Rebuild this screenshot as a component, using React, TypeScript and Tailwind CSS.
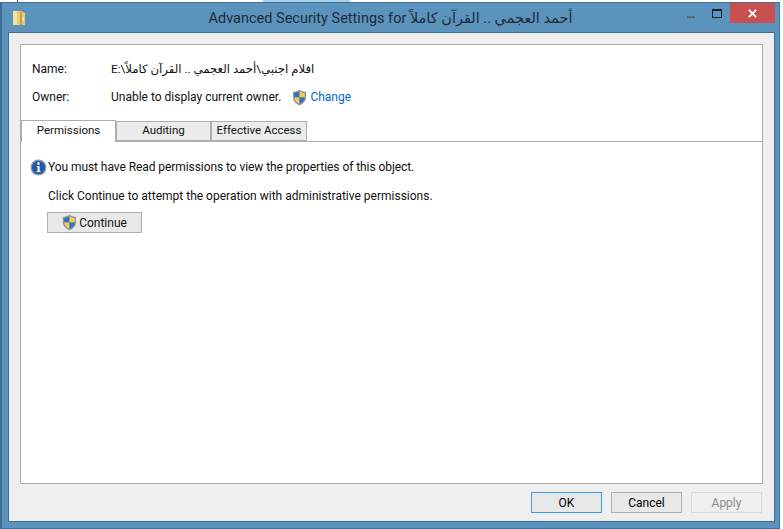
function Shield({ className }: { className?: string }) {
  return (
    <svg viewBox="0 0 16 18" className={className}>
      <path d="M8 .6 C6 2 3.4 2.8 1 2.9 V9 C1 13 4.4 16 8 17.4 C11.6 16 15 13 15 9 V2.9 C12.6 2.8 10 2 8 .6Z" fill="#8a95a3" />
      <path d="M8 2.2 V9 H2.4 V4.2 C4.4 4 6.4 3.3 8 2.2Z" fill="#2f6fc4" />
      <path d="M8 2.2 C9.6 3.3 11.6 4 13.6 4.2 V9 H8Z" fill="#f6cf4a" />
      <path d="M2.4 9 H8 V15.8 C5.2 14.6 2.6 12.2 2.4 9Z" fill="#f6cf4a" />
      <path d="M8 9 H13.6 C13.4 12.2 10.8 14.6 8 15.8Z" fill="#2f6fc4" />
    </svg>
  )
}

function InfoIcon() {
  return (
    <svg viewBox="0 0 17 17" className="h-[17px] w-[17px] shrink-0">
      <circle cx="8.5" cy="8.5" r="8" fill="#8b98ab" />
      <circle cx="8.5" cy="8.5" r="6.6" fill="#2458a8" />
      <circle cx="8.5" cy="4.6" r="1.3" fill="#fff" />
      <path d="M6.9 7 H9.6 V12 H10.6 V13 H6.6 V12 H7.7 V8 H6.9Z" fill="#fff" />
    </svg>
  )
}

function Tab({ label, active, width }: { label: string; active?: boolean; width: string }) {
  return (
    <div
      className={
        active
          ? `${width} relative z-10 flex h-[22px] items-center justify-center border border-b-0 border-[#adadad] bg-white pb-[2px] text-[11.5px]`
          : `${width} mt-px flex h-[20px] items-center justify-center border border-[#adadad] bg-[#ececec] text-[11.5px]`
      }
    >
      {label}
    </div>
  )
}

function FooterButton({ label, kind }: { label: string; kind?: 'default' | 'disabled' }) {
  const look =
    kind === 'default'
      ? 'border-[#3c9cf0] bg-[#e8e8e8] text-black'
      : kind === 'disabled'
        ? 'border-[#d9d9d9] bg-[#efefef] text-[#8a8a8a]'
        : 'border-[#adadad] bg-[#e8e8e8] text-black'
  return (
    <button type="button" className={`flex h-[21px] w-[71px] items-center justify-center border ${look}`}>
      {label}
    </button>
  )
}

export default function App() {
  return (
    <div
      className="h-[529px] w-[783px] overflow-hidden bg-white text-[12px] text-[#111]"
      style={{ fontFamily: 'Roboto, "DejaVu Sans", sans-serif' }}
    >
      {/* Restos da janela de trás */}
      <div className="flex h-[2px]">
        <div className="w-[17px]" />
        <div className="w-px bg-[#555]" />
        <div className="w-[245px]" />
        <div className="w-[87px] bg-[#a9d0ea]" />
      </div>
      <div className="flex h-[527px] w-[780px] flex-col border border-l-2 border-[#3f6f94] bg-[#5b93bd]">
        {/* Barra de título */}
        <div className="grid h-[29px] shrink-0 grid-cols-[1fr_auto_1fr] items-center">
          <div className="pl-[10px]">
            <svg viewBox="0 0 14 16" className="h-[16px] w-[14px]">
              <path d="M1 1 H9 L13 3 V15 H1Z" fill="#e9cd72" />
              <path d="M1 1 H5 V15 H1Z" fill="#f4e3a0" />
              <path d="M8 1 L10 2 V15 H8Z" fill="#c9a23c" />
              <path d="M11 7 H12 V11 H11Z" fill="#d8e6ee" />
            </svg>
          </div>
          <div className="pt-[3px] text-[14.5px] leading-none text-[#1d2b38]">
            Advanced Security Settings for <span dir="rtl">أحمد العجمي .. القرآن كاملاً</span>
          </div>
          <div className="flex items-start justify-end self-start pr-[4px]">
            <svg viewBox="0 0 10 3" className="mt-[13px] mr-[17px] h-[3px] w-[8px]">
              <rect width="10" height="2" fill="#55616c" />
            </svg>
            <div className="mt-[6px] mr-[8px] h-[9px] w-[10px] border border-t-2 border-[#17232e]" />
            <div className="flex h-[20px] w-[45px] items-center justify-center bg-[#c75050]">
              <svg viewBox="0 0 10 10" className="h-[9px] w-[9px]">
                <path d="M1 1 L9 9 M9 1 L1 9" stroke="#fff" strokeWidth="2" />
              </svg>
            </div>
          </div>
        </div>

        {/* Área do cliente */}
        <div className="mr-[4px] ml-[6px] flex flex-1 flex-col border border-[#3f6f94] bg-[#efefef] px-[11px] pt-[11px]">
          <div className="flex h-[440px] flex-col border border-[#adadad] bg-white">
            <div className="mt-[16px] flex h-[16px] items-center pl-[11px]">
              <span className="w-[79px]">Name:</span>
              <span dir="ltr" className="pt-px text-[11.7px]">E:\افلام اجنبي\أحمد العجمي .. القرآن كاملاً</span>
            </div>
            <div className="mt-[12px] flex h-[16px] items-center pl-[11px]">
              <span className="w-[79px]">Owner:</span>
              <span>Unable to display current owner.</span>
              <Shield className="mr-[3px] ml-[11px] h-[17px] w-[15px]" />
              <span className="text-[#0066cc]">Change</span>
            </div>

            <div className="mt-[15px] flex h-[22px] border-b border-[#adadad]">
              <Tab label="Permissions" active width="w-[95px]" />
              <Tab label="Auditing" width="w-[95px]" />
              <Tab label="Effective Access" width="w-[96px]" />
            </div>

            <div className="flex items-center gap-[1px] pt-[16px] pl-[9px]">
              <InfoIcon />
              <span className="tracking-[-0.07px]">You must have Read permissions to view the properties of this object.</span>
            </div>
            <div className="pt-[12px] pl-[27px] leading-[17px]">
              Click Continue to attempt the operation with administrative permissions.
            </div>
            <button
              type="button"
              className="mt-[7px] ml-[26px] flex h-[21px] w-[95px] items-center justify-center gap-[2px] border border-[#adadad] bg-[#e8e8e8]"
            >
              <Shield className="h-[17px] w-[15px]" />
              Continue
            </button>
          </div>

          <div className="mt-[8px] flex justify-end gap-[9px] pr-px">
            <FooterButton label="OK" kind="default" />
            <FooterButton label="Cancel" />
            <FooterButton label="Apply" kind="disabled" />
          </div>
        </div>
        <div className="h-[6px] shrink-0" />
      </div>
    </div>
  )
}
